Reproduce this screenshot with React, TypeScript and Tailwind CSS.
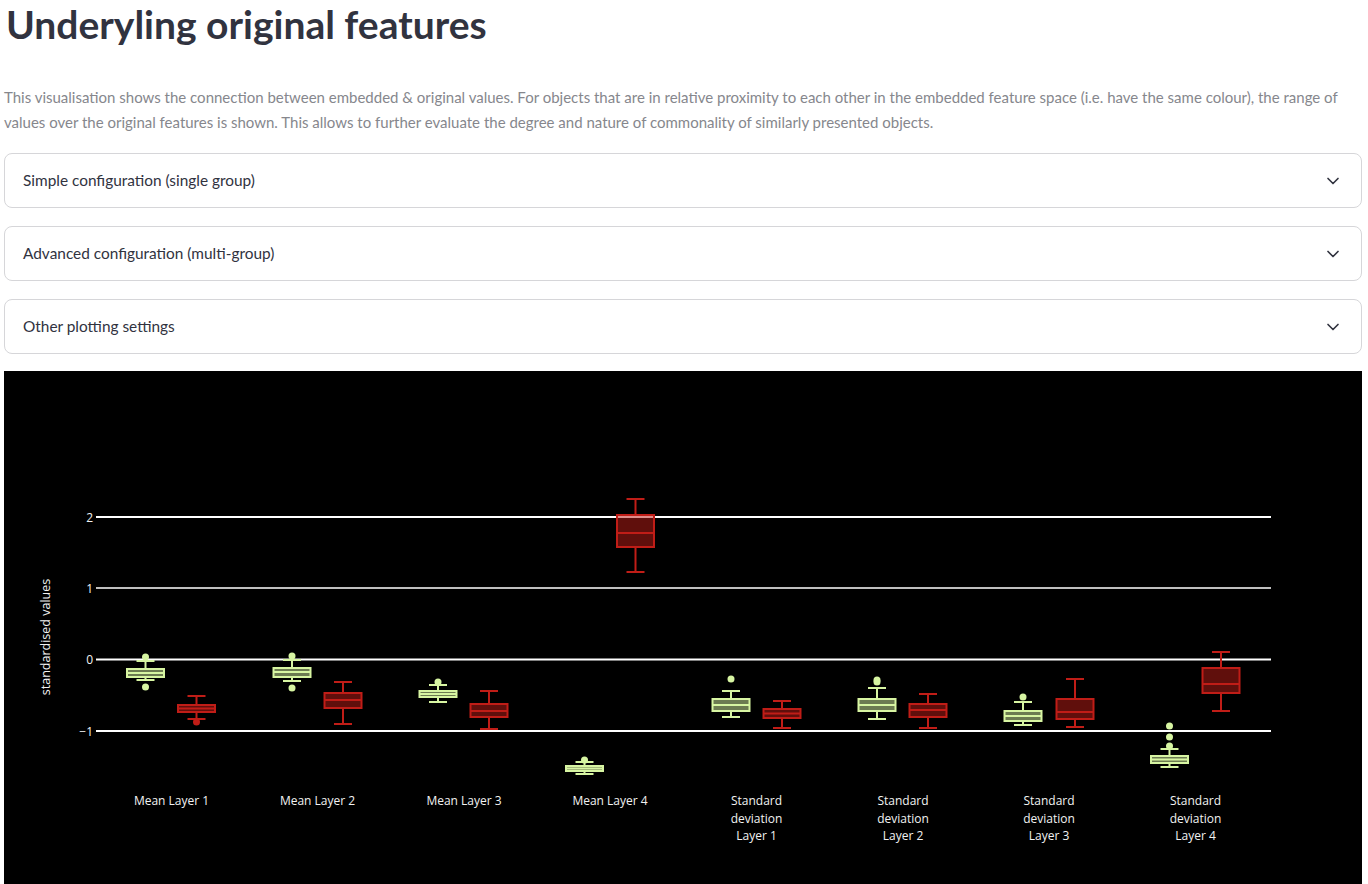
import React from "react";
import { ChevronDown } from "lucide-react";

type Box = {
  cx: number;
  capTop: number;
  q3: number;
  med: number;
  q1: number;
  capBot: number;
  outliers: number[];
  color: "g" | "r";
};

const G = "#d7f5a2";
const GF = "rgba(215,245,162,0.5)";
const R = "#c01d17";
const RF = "rgba(192,29,23,0.5)";

const boxes: Box[] = [
  { cx: 145.5, capTop: 661, q3: 669, med: 673, q1: 677, capBot: 680, outliers: [657, 687], color: "g" },
  { cx: 196.5, capTop: 696, q3: 705, med: 708.5, q1: 712, capBot: 719, outliers: [722], color: "r" },
  { cx: 292, capTop: 660, q3: 668, med: 672, q1: 677, capBot: 681, outliers: [656, 688], color: "g" },
  { cx: 343, capTop: 682, q3: 693, med: 700, q1: 708, capBot: 724, outliers: [], color: "r" },
  { cx: 438, capTop: 685, q3: 691, med: 694, q1: 697, capBot: 702, outliers: [682], color: "g" },
  { cx: 489, capTop: 691, q3: 704, med: 711, q1: 717, capBot: 729, outliers: [], color: "r" },
  { cx: 584.5, capTop: 762, q3: 766, med: 768.5, q1: 771, capBot: 774, outliers: [760], color: "g" },
  { cx: 635.5, capTop: 499, q3: 515, med: 533, q1: 547, capBot: 572, outliers: [], color: "r" },
  { cx: 731, capTop: 691, q3: 699, med: 705, q1: 711, capBot: 717, outliers: [679], color: "g" },
  { cx: 782, capTop: 701, q3: 709, med: 713.5, q1: 718, capBot: 728, outliers: [], color: "r" },
  { cx: 877, capTop: 688, q3: 699, med: 705, q1: 711, capBot: 719, outliers: [680, 682], color: "g" },
  { cx: 928, capTop: 694, q3: 704, med: 710, q1: 717, capBot: 728, outliers: [], color: "r" },
  { cx: 1023, capTop: 702, q3: 711, med: 716, q1: 721, capBot: 725, outliers: [697], color: "g" },
  { cx: 1075, capTop: 679, q3: 699, med: 712, q1: 719, capBot: 727, outliers: [], color: "r" },
  { cx: 1169.5, capTop: 749, q3: 756, med: 759.5, q1: 763, capBot: 767, outliers: [726, 737, 746], color: "g" },
  { cx: 1221, capTop: 652, q3: 668, med: 684, q1: 693, capBot: 711, outliers: [], color: "r" },
];

const labels: { x: number; lines: string[] }[] = [
  { x: 171.5, lines: ["Mean Layer 1"] },
  { x: 317.5, lines: ["Mean Layer 2"] },
  { x: 464, lines: ["Mean Layer 3"] },
  { x: 610, lines: ["Mean Layer 4"] },
  { x: 756.5, lines: ["Standard", "deviation", "Layer 1"] },
  { x: 903, lines: ["Standard", "deviation", "Layer 2"] },
  { x: 1049, lines: ["Standard", "deviation", "Layer 3"] },
  { x: 1195.5, lines: ["Standard", "deviation", "Layer 4"] },
];

const grid = [
  { y: 517, t: "2" },
  { y: 588, t: "1" },
  { y: 659.5, t: "0" },
  { y: 731, t: "\u22121" },
];

function BoxShape({ b }: { b: Box }) {
  const stroke = b.color === "g" ? G : R;
  const fill = b.color === "g" ? GF : RF;
  const hw = 18.5;
  const cw = 9;
  return (
    <g>
      <line x1={b.cx} x2={b.cx} y1={b.capTop} y2={b.q3} stroke={stroke} strokeWidth={2} />
      <line x1={b.cx} x2={b.cx} y1={b.q1} y2={b.capBot} stroke={stroke} strokeWidth={2} />
      <line x1={b.cx - cw} x2={b.cx + cw} y1={b.capTop} y2={b.capTop} stroke={stroke} strokeWidth={2} />
      <line x1={b.cx - cw} x2={b.cx + cw} y1={b.capBot} y2={b.capBot} stroke={stroke} strokeWidth={2} />
      <rect x={b.cx - hw} y={b.q3} width={hw * 2} height={b.q1 - b.q3} fill={fill} stroke={stroke} strokeWidth={2} />
      <line x1={b.cx - hw} x2={b.cx + hw} y1={b.med} y2={b.med} stroke={stroke} strokeWidth={2} />
      {b.outliers.map((o, i) => (
        <circle key={i} cx={b.cx} cy={o} r={3.5} fill={stroke} />
      ))}
    </g>
  );
}

function Chart() {
  return (
    <div className="h-[520px] bg-black">
      <svg width="1358" height="520" viewBox="4 371 1358 520" style={{ fontFamily: '"Open Sans", "Noto Sans", sans-serif' }}>
        {grid.map((g) => (
          <g key={g.t}>
            <line x1={96} x2={1271} y1={g.y} y2={g.y} stroke="#ffffff" strokeWidth={g.t === "1" ? 1.5 : 2} />
            <text x={93} y={g.y + 4.5} fill="#f2f2f2" fontSize={12} textAnchor="end">
              {g.t}
            </text>
          </g>
        ))}
        <text
          x={0}
          y={0}
          fill="#f2f2f2"
          fontSize={12.5}
          textAnchor="middle"
          transform="translate(50 637) rotate(-90)"
        >
          standardised values
        </text>
        {boxes.map((b, i) => (
          <BoxShape key={i} b={b} />
        ))}
        {labels.map((l) =>
          l.lines.map((t, j) => (
            <text key={l.x + t} x={l.x} y={805 + j * 17.5} fill="#f2f2f2" fontSize={12} textAnchor="middle">
              {t}
            </text>
          ))
        )}
      </svg>
    </div>
  );
}

function Expander({ title }: { title: string }) {
  return (
    <div className="flex h-[55px] items-center justify-between rounded-lg border border-[#d6d6d9] bg-white pl-[18px] pr-[18px]">
      <span className="text-[15.4px] text-[#31333f]">{title}</span>
      <ChevronDown size={20} strokeWidth={2} className="text-[#31333f]" />
    </div>
  );
}

export default function App() {
  return (
    <div className="min-h-screen bg-white" style={{ fontFamily: 'Lato, "Noto Sans", sans-serif' }}>
      <div className="pl-[4px] pr-[6px]">
        <h1 className="pl-[2px] pt-0 text-[39px] font-bold leading-[48px] text-[#31333f]">
          Underyling original features
        </h1>
        <p className="mt-[37px] text-[15px] leading-[25px] text-[#86878d]">
          This visualisation shows the connection between embedded &amp; original values. For objects that are in relative proximity to each other in the embedded feature space (i.e. have the same colour), the range of values over the original features is shown. This allows to further evaluate the degree and nature of commonality of similarly presented objects.
        </p>
        <div className="mt-[18px] flex flex-col gap-[18px]">
          <Expander title="Simple configuration (single group)" />
          <Expander title="Advanced configuration (multi-group)" />
          <Expander title="Other plotting settings" />
        </div>
        <div className="mt-[17px]">
          <Chart />
        </div>
      </div>
    </div>
  );
}
